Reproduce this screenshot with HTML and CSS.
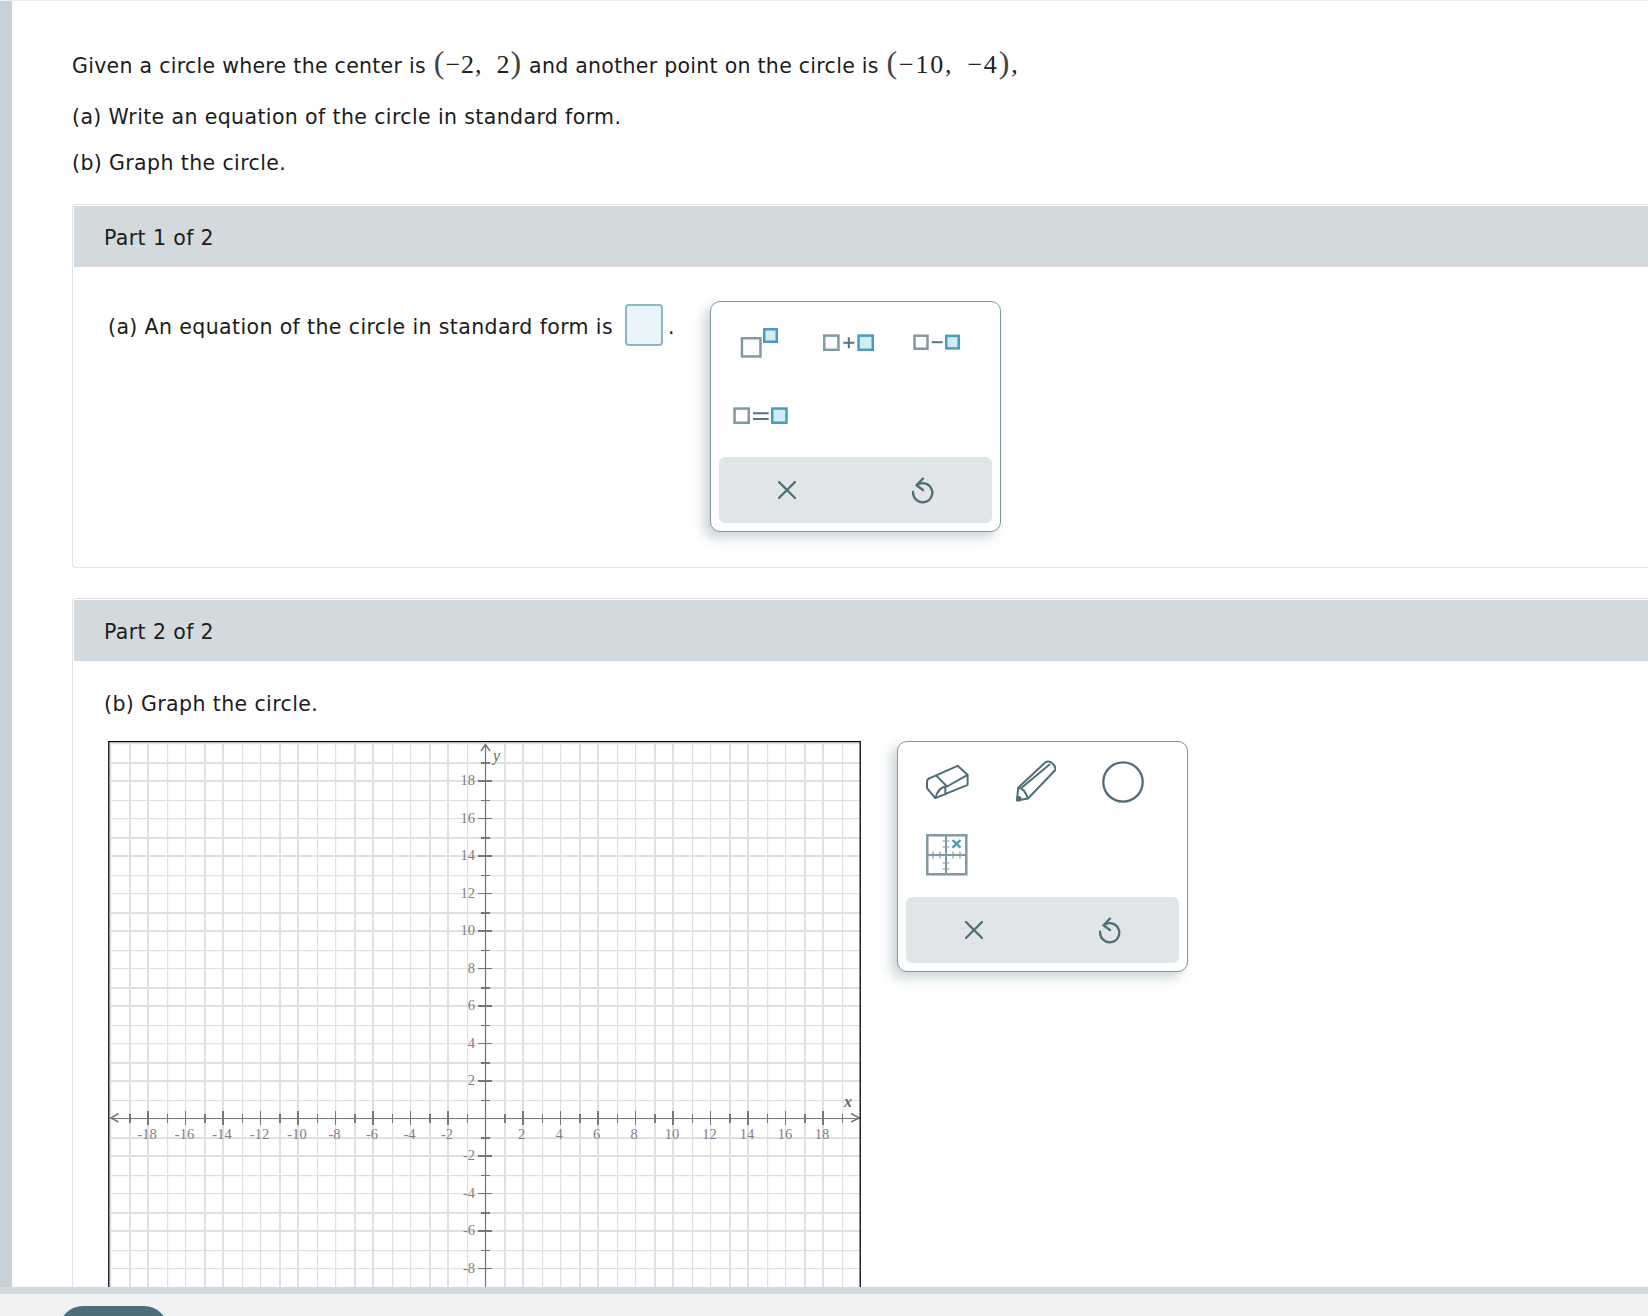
FILE: index.html
```html
<!DOCTYPE html>
<html lang="en">
<head>
<meta charset="utf-8">
<title>Circle question</title>
<link rel="stylesheet" href="styles.css">
</head>
<body>
<div class="app">
  <div class="workspace">
    <div class="strip"></div>
    <main class="content">
      <p class="intro intro-first">Given a circle where the center is <span class="math math-a"><span class="paren">(</span>−2,<span class="mgap"></span>2<span class="paren">)</span></span> and another point on the circle is <span class="math math-b"><span class="paren">(</span>−10,<span class="mgap"></span>−4<span class="paren">)</span>,</span></p>
      <p class="intro">(a) Write an equation of the circle in standard form.</p>
      <p class="intro intro-last">(b) Graph the circle.</p>

      <section class="card card-one">
        <header class="card-head">Part 1 of 2</header>
        <div class="answer-row">
          <div class="prompt">
            <span>(a) An equation of the circle in standard form is</span>
            <span class="answer-box"></span>
            <span class="dot">.</span>
          </div>
          <div class="panel">
            <div class="tools tools-math">
              <button class="tool" type="button" aria-label="Exponent">
                <svg width="40" height="32" viewBox="0 0 40 32"><rect class="sq" x="1.95" y="11.25" width="18.5" height="18.2"/><rect class="sq-on" x="24.25" y="2.25" width="12.5" height="12.5"/></svg>
              </button>
              <button class="tool" type="button" aria-label="Sum">
                <svg width="53" height="18" viewBox="0 0 53 18"><rect class="sq" x="2.25" y="1.6" width="14.2" height="14.2"/><path class="op" d="M21.3 8.7H32.3M26.8 3.2V14.2"/><rect class="sq-on" x="36.55" y="1.6" width="14.2" height="14.2"/></svg>
              </button>
              <button class="tool" type="button" aria-label="Difference">
                <svg width="49" height="17" viewBox="0 0 49 17"><rect class="sq" x="2.5" y="1.7" width="13" height="13"/><path class="op" d="M19.7 8.2H30.7"/><rect class="sq-on" x="34.25" y="1.9" width="12.5" height="12.5"/></svg>
              </button>
              <button class="tool" type="button" aria-label="Equation">
                <svg width="57" height="18" viewBox="0 0 57 18"><rect class="sq" x="2.55" y="1.55" width="14.2" height="14.2"/><path class="op" d="M21 6.3H36.7M21 12H36.7"/><rect class="sq-on" x="40.25" y="1.55" width="14.2" height="14.2"/></svg>
              </button>
            </div>
            <div class="panel-foot">
              <button class="foot-btn" type="button" aria-label="Clear">
                <svg width="18" height="18" viewBox="0 0 18 18"><path class="act" d="M1 1L17 17M17 1L1 17"/></svg>
              </button>
              <button class="foot-btn" type="button" aria-label="Undo">
                <svg width="24" height="28" viewBox="1.5 0 24 28"><path class="act" d="M12.5 2.5L6 9.3L12.5 14M6 9.3A9.6 9.6 0 1 1 2.6 15.7"/></svg>
              </button>
            </div>
          </div>
        </div>
      </section>

      <section class="card card-two">
        <header class="card-head">Part 2 of 2</header>
        <p class="graph-title">(b) Graph the circle.</p>
        <div class="graph-row">
          <svg class="graph" width="753" height="753" viewBox="108 741 753 753">
            <defs>
              <pattern id="grid" patternUnits="userSpaceOnUse" x="129" y="762" width="75" height="75">
                <rect class="gl" x="0" y="0" width="2" height="75"/>
                <rect class="gl" x="18" y="0" width="2" height="75"/>
                <rect class="gl" x="38" y="0" width="1.2" height="75"/>
                <rect class="gl" x="56" y="0" width="1.2" height="75"/>
                <rect class="gl" x="0" y="0" width="75" height="2"/>
                <rect class="gl" x="0" y="18" width="75" height="2"/>
                <rect class="gl" x="0" y="38" width="75" height="1.2"/>
                <rect class="gl" x="0" y="56" width="75" height="1.2"/>
              </pattern>
            </defs>
            <rect x="110" y="743" width="750" height="751" fill="url(#grid)"/>
            <path class="axis" d="M110 1118.5H860M485.5 744V1494"/>
            <path class="axis arrow" d="M118.5 1113.5L111 1118L118.5 1122M851 1113.5L859.5 1118L851 1122M481 751L485.5 744.5L490 751"/>
            <path class="tick wide" d="M130 1114V1123M205 1114V1123M280 1114V1123M355 1114V1123M430 1114V1123M505 1114V1123M580 1114V1123M655 1114V1123M730 1114V1123M805 1114V1123M148 1111V1125M223 1111V1125M298 1111V1125M373 1111V1125M448 1111V1125M523 1111V1125M598 1111V1125M673 1111V1125M748 1111V1125M823 1111V1125M481 763H490M481 838H490M481 913H490M481 988H490M481 1063H490M481 1138H490M481 1213H490M481 1288H490M478 781H492M478 856H492M478 931H492M478 1006H492M478 1081H492M478 1156H492M478 1231H492"/>
            <path class="tick thin" d="M167.5 1114V1123M242.5 1114V1123M317.5 1114V1123M392.5 1114V1123M467.5 1114V1123M542.5 1114V1123M617.5 1114V1123M692.5 1114V1123M767.5 1114V1123M842.5 1114V1123M185.5 1111V1125M260.5 1111V1125M335.5 1111V1125M410.5 1111V1125M560.5 1111V1125M635.5 1111V1125M710.5 1111V1125M785.5 1111V1125M481 800.5H490M481 875.5H490M481 950.5H490M481 1025.5H490M481 1100.5H490M481 1175.5H490M481 1250.5H490M478 818.5H492M478 893.5H492M478 968.5H492M478 1043.5H492M478 1193.5H492M478 1268.5H492"/>
            <g class="labels-x">
              <text x="147" y="1139">-18</text><text x="184.5" y="1139">-16</text><text x="222" y="1139">-14</text><text x="259.5" y="1139">-12</text><text x="297" y="1139">-10</text><text x="334.5" y="1139">-8</text><text x="372" y="1139">-6</text><text x="409.5" y="1139">-4</text><text x="447" y="1139">-2</text>
              <text x="521.5" y="1139">2</text><text x="559" y="1139">4</text><text x="596.5" y="1139">6</text><text x="634" y="1139">8</text><text x="672" y="1139">10</text><text x="709.5" y="1139">12</text><text x="747" y="1139">14</text><text x="785" y="1139">16</text><text x="822" y="1139">18</text>
            </g>
            <g class="labels-y">
              <text x="475" y="785">18</text><text x="475" y="823">16</text><text x="475" y="860">14</text><text x="475" y="898">12</text><text x="475" y="935">10</text><text x="475" y="973">8</text><text x="475" y="1010">6</text><text x="475" y="1048">4</text><text x="475" y="1085">2</text><text x="475" y="1160">-2</text><text x="475" y="1198">-4</text><text x="475" y="1235">-6</text><text x="475" y="1273">-8</text>
            </g>
            <text class="axis-name" x="493" y="760.5">y</text>
            <text class="axis-name axis-x" x="844" y="1107">x</text>
            <path class="frame" d="M108.8 1494V741.7H860.2V1494"/>
          </svg>
          <div class="panel">
            <div class="tools tools-graph">
              <button class="tool" type="button" aria-label="Eraser">
                <svg width="48" height="37" viewBox="0 0 48 37"><path class="act act-thin" d="M34.6 2.8L44.6 11.8V21.8L12.3 35.1L4 25.1V19Q4 16 7.5 14.8ZM14 13.4L24 23.5L44.6 11.8M24 23.5Q15.5 23.5 12.3 35.1M22.3 23.5V31.5"/></svg>
              </button>
              <button class="tool" type="button" aria-label="Pencil">
                <svg width="42" height="44" viewBox="-1.5 0 42 44"><path class="act act-thin" d="M1.5 40.5L2.7 27.7L30 2.2Q33.5 0.6 36.7 3.3Q40.5 6.5 39.8 10L12.5 38.5ZM2.7 27.7Q8.5 27.5 12.5 38.5M7 27L34 4.6"/><circle class="fillact" cx="3.4" cy="38.7" r="2.7"/></svg>
              </button>
              <button class="tool" type="button" aria-label="Circle">
                <svg width="44" height="44" viewBox="0 0 44 44"><circle class="act" cx="22" cy="22" r="19.7"/></svg>
              </button>
              <button class="tool" type="button" aria-label="Point">
                <svg width="42" height="42" viewBox="0 0 42 42"><rect class="sq" x="1.3" y="1.3" width="39" height="39"/><path class="grid-ic" d="M20 1V41M1 21H41"/><path class="grid-tick" d="M7 17.5V24.5M14 17.5V24.5M27 17.5V24.5M34 17.5V24.5M16.5 7H23.5M16.5 13H23.5M16.5 29H23.5M16.5 35H23.5"/><path class="grid-x" d="M26.5 6L34.5 13.7M34.5 6L26.5 13.7"/></svg>
              </button>
            </div>
            <div class="panel-foot">
              <button class="foot-btn" type="button" aria-label="Clear">
                <svg width="18" height="18" viewBox="0 0 18 18"><path class="act" d="M1 1L17 17M17 1L1 17"/></svg>
              </button>
              <button class="foot-btn" type="button" aria-label="Undo">
                <svg width="24" height="28" viewBox="1.5 0 24 28"><path class="act" d="M12.5 2.5L6 9.3L12.5 14M6 9.3A9.6 9.6 0 1 1 2.6 15.7"/></svg>
              </button>
            </div>
          </div>
        </div>
      </section>
    </main>
  </div>
  <footer class="dock">
    <div class="dock-btn"></div>
  </footer>
</div>
</body>
</html>
```
FILE: styles.css
```css
* { box-sizing: border-box; }
html, body { margin: 0; padding: 0; height: 100%; overflow: hidden; background: #fff; }
body { font-family: "DejaVu Sans", Verdana, sans-serif; font-size: 20.5px; letter-spacing: 0.38px; color: #1c1c1c; }
.app { display: flex; flex-direction: column; height: 1316px; }
.workspace { flex: 1; min-height: 0; display: flex; overflow: hidden; border-top: 1px solid #eceff0; }
.strip { width: 12px; flex: none; background: #c6d2d8; }
.content { flex: 1; min-width: 0; padding: 53px 0 0 60px; }

.intro { margin: 0 0 22px; line-height: 24px; white-space: nowrap; }
.intro-first { margin-bottom: 27px; letter-spacing: 0.28px; }
.intro-last { margin-bottom: 29px; }

.math { font-family: "Liberation Serif", serif; font-size: 26px; letter-spacing: 1px; line-height: 0; color: #222; }
.paren { font-size: 32px; font-weight: 400; color: #444; }
.mgap { display: inline-block; width: 14px; }
.math-a { margin: 0 0 0 1px; }
.math-b { margin-left: 1px; letter-spacing: 1.8px; }

.card { margin-right: -20px; padding: 1px 0 0 1px; border: 1px solid #dfe3e5; border-right: 0; border-radius: 4px 0 0 4px; }
.card-one { height: 364px; }
.card-two { margin-top: 30px; }
.card-head { height: 61px; padding: 2px 0 0 30px; display: flex; align-items: center; background: #d3dadd; }

.answer-row { display: flex; padding: 34px 0 0 34px; }
.prompt { width: 602px; flex: none; display: flex; align-items: flex-start; padding-top: 3px; line-height: 46px; white-space: nowrap; }
.answer-box { width: 38px; height: 42px; margin-left: 12px; flex: none; background: #e9f4fa; border: 2px solid #8db6c2; border-radius: 4px; }
.dot { margin-left: 5px; line-height: 46px; }

.panel { width: 291px; height: 231px; flex: none; padding: 3px 0 8px; background: #fff; border: 1px solid #7f969f; border-radius: 10px; box-shadow: -6px 6px 12px rgba(77, 109, 120, 0.28); display: flex; flex-direction: column; }
.tools { display: grid; grid-template-columns: repeat(3, 88px); grid-auto-rows: 73px; height: 146px; padding-left: 5px; }
.tools-math { padding-top: 1px; }
.tools-graph { grid-auto-rows: 73.5px; }
.tool { display: flex; align-items: center; justify-content: center; padding: 0; border: 0; background: none; }
.panel-foot { flex: 1; display: flex; margin: 6px 8px 0; background: #e0e5e7; border-radius: 6px; }
.foot-btn { flex: 1; display: flex; align-items: center; justify-content: center; padding: 0; border: 0; background: none; }

svg { display: block; }
.sq { fill: #fff; stroke: #8199a3; stroke-width: 2.5; }
.sq-on { fill: #d2ecf3; stroke: #4a9db8; stroke-width: 2.5; }
.op { fill: none; stroke: #56737e; stroke-width: 2; }
.act { fill: none; stroke: #4d6d78; stroke-width: 2.3; stroke-linejoin: round; stroke-linecap: round; }
.act-thin { stroke-width: 2; }
.fillact { fill: #4d6d78; }
.grid-ic { fill: none; stroke: #8199a3; stroke-width: 2; }
.grid-tick { fill: none; stroke: #8199a3; stroke-width: 1.2; }
.grid-x { fill: none; stroke: #4a9db8; stroke-width: 2.4; }

.graph-title { margin: 0; padding: 31px 0 0 30px; line-height: 24px; height: 80px; }
.graph-row { display: flex; gap: 36px; padding-left: 34px; align-items: flex-start; }
.graph { flex: none; letter-spacing: 0; }
.gl { fill: #e0e0e0; }
.axis { fill: none; stroke: #777; stroke-width: 1.2; }
.arrow { stroke-width: 1.5; }
.tick { fill: none; stroke: #777; }
.wide { stroke-width: 2; }
.thin { stroke-width: 1; }
.labels-x text, .labels-y text { font-family: "Liberation Serif", serif; font-size: 14.5px; fill: #808080; }
.labels-x text { text-anchor: middle; }
.labels-y text { text-anchor: end; }
.axis-name { font-family: "Liberation Serif", serif; font-style: italic; font-size: 16px; fill: #666; }
.axis-x { font-weight: 700; }
.frame { fill: none; stroke: #000; stroke-width: 1.3; }

.dock { height: 29px; flex: none; border-top: 7px solid #d3dadd; background: #f0f2f3; overflow: hidden; padding: 12px 0 0 59px; }
.dock-btn { width: 109px; height: 48px; background: #4d6d78; border-radius: 24px; }
```
